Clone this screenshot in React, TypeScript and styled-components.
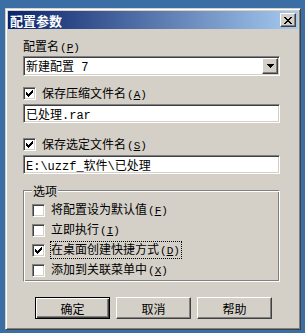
import styled, { createGlobalStyle } from "styled-components";

const GlobalStyle = createGlobalStyle`
  html, body {
    margin: 0;
    padding: 0;
    background: #3a6ea5;
  }
  body {
    font-family: "Liberation Mono", "Noto Sans CJK SC", monospace;
    font-size: 12px;
    color: #000;
  }
`;

const Desktop = styled.div`
  width: 305px;
  height: 333px;
  padding: 8px 0 0 5px;
  box-sizing: border-box;
`;

/*----------------------------------
	Window frame
----------------------------------*/
const Window = styled.div`
  width: 296px;
  height: 322px;
  box-sizing: border-box;
  background: #d4d0c8;
  border: 1px solid;
  border-color: #d4d0c8 #404040 #404040 #d4d0c8;
  box-shadow: inset 1px 1px #fff, inset -1px -1px #808080;
  padding: 2px;
  display: flex;
  flex-direction: column;
`;

const TitleBar = styled.div`
  height: 18px;
  display: flex;
  align-items: center;
  justify-content: space-between;
  padding: 0 2px;
  background: linear-gradient(90deg, #0a246a 0%, #a6caf0 100%);
`;

const Title = styled.span`
  color: #fff;
  font-family: "Noto Sans CJK SC", sans-serif;
  font-weight: bold;
  font-size: 13px;
  line-height: 15px;
`;

const Raised = styled.div`
  box-sizing: border-box;
  background: #d4d0c8;
  border: 1px solid;
  border-color: #fff #404040 #404040 #fff;
  box-shadow: inset -1px -1px #808080;
  display: flex;
  align-items: center;
  justify-content: center;
`;

const CloseButton = styled(Raised)`
  width: 16px;
  height: 14px;
`;

const Content = styled.div`
  display: flex;
  flex-direction: column;
  padding: 9px 18px 0 15px;
`;

const Label = styled.div`
  line-height: 16px;
  height: 16px;
  font-family: "Noto Sans CJK SC", sans-serif;
`;

const Key = styled.span`
  font-family: "Liberation Mono", monospace;
  font-size: 11px;
  margin-left: 1px;
`;

/*----------------------------------
	Fields
----------------------------------*/
const Sunken = styled.div<{ $h: number; $mt: number }>`
  box-sizing: border-box;
  height: ${(p) => p.$h}px;
  margin-top: ${(p) => p.$mt}px;
  background: #fff;
  border: 1px solid;
  border-color: #808080 #fff #fff #808080;
  box-shadow: inset 1px 1px #404040, inset -1px -1px #d4d0c8;
  display: flex;
  align-items: center;
  padding-left: 2px;
  white-space: nowrap;
`;

const Combo = styled(Sunken)`
  justify-content: space-between;
  padding-right: 1px;
`;

const ComboText = styled.span`
  font-family: "Noto Sans CJK SC", sans-serif;
`;

const DropButton = styled(Raised)`
  width: 16px;
  height: 16px;
`;

const Row = styled.div<{ $mt?: number; $h?: number }>`
  display: flex;
  align-items: center;
  height: ${(p) => p.$h ?? 15}px;
  margin-top: ${(p) => p.$mt ?? 0}px;
`;

const Box = styled.div`
  width: 13px;
  height: 13px;
  box-sizing: border-box;
  flex: none;
  background: #fff;
  border: 1px solid;
  border-color: #808080 #fff #fff #808080;
  box-shadow: inset 1px 1px #404040, inset -1px -1px #d4d0c8;
  display: flex;
  align-items: center;
  justify-content: center;
`;

const BoxText = styled.span<{ $focus?: boolean }>`
  margin-left: ${(p) => (p.$focus ? 5 : 6)}px;
  font-family: "Noto Sans CJK SC", sans-serif;
  line-height: 14px;
  border: ${(p) => (p.$focus ? "1px dotted #000" : "none")};
  padding: 0 1px 0 0;
  white-space: nowrap;
`;

/*----------------------------------
	Group box
----------------------------------*/
const Group = styled.div`
  position: relative;
  margin-top: 16px;
  border: 1px solid;
  border-color: #808080 #fff #fff #808080;
  box-shadow: inset 1px 1px #fff, inset -1px -1px #808080;
  padding: 9px 0 1px 8px;
`;

const Legend = styled.span`
  position: absolute;
  top: -7px;
  left: 8px;
  padding: 0 1px;
  background: #d4d0c8;
  line-height: 13px;
  font-family: "Noto Sans CJK SC", sans-serif;
`;

/*----------------------------------
	Buttons
----------------------------------*/
const Buttons = styled.div`
  display: flex;
  gap: 6px;
  margin: 15px 0 0 12px;
`;

const Button = styled.div<{ $default?: boolean }>`
  width: 75px;
  height: 22px;
  box-sizing: border-box;
  display: flex;
  align-items: center;
  justify-content: center;
  font-family: "Noto Sans CJK SC", sans-serif;
  font-size: 12px;
  background: #d4d0c8;
  border: 1px solid;
  border-color: ${(p) => (p.$default ? "#000" : "#fff #404040 #404040 #fff")};
  box-shadow: ${(p) =>
    p.$default
      ? "inset 1px 1px #fff, inset -1px -1px #404040, inset -2px -2px #808080"
      : "inset -1px -1px #808080"};
`;

const CloseGlyph = () => (
  <svg width="8" height="7" shapeRendering="crispEdges">
    {[0, 1, 2, 3, 4, 5, 6].map((r) => {
      const l = Math.min(r, 6 - r);
      return (
        <g key={r}>
          <rect x={l} y={r} width="2" height="1" fill="#000" />
          <rect x={6 - l} y={r} width="2" height="1" fill="#000" />
        </g>
      );
    })}
  </svg>
);

const ArrowGlyph = () => (
  <svg width="7" height="4" shapeRendering="crispEdges">
    {[0, 1, 2, 3].map((r) => (
      <rect key={r} x={r} y={r} width={7 - r * 2} height="1" fill="#000" />
    ))}
  </svg>
);

const CheckGlyph = () => (
  <svg width="7" height="7" shapeRendering="crispEdges">
    {[2, 3, 4, 3, 2, 1, 0].map((t, i) => (
      <rect key={i} x={i} y={t} width="1" height="3" fill="#000" />
    ))}
  </svg>
);

const CheckBox = ({
  checked,
  focus,
  children,
}: {
  checked?: boolean;
  focus?: boolean;
  children: React.ReactNode;
}) => (
  <>
    <Box>{checked && <CheckGlyph />}</Box>
    <BoxText $focus={focus}>{children}</BoxText>
  </>
);

const options = [
  { text: "将配置设为默认值", key: "F", checked: false },
  { text: "立即执行", key: "I", checked: false },
  { text: "在桌面创建快捷方式", key: "D", checked: true, focus: true },
  { text: "添加到关联菜单中", key: "X", checked: false },
];

const App = () => {
  return (
    <Desktop>
      <GlobalStyle />
      <Window>
        <TitleBar>
          <Title>配置参数</Title>
          <CloseButton>
            <CloseGlyph />
          </CloseButton>
        </TitleBar>
        <Content>
          <Label>
            配置名<Key>(<u>P</u>)</Key>
          </Label>
          <Combo $h={20} $mt={2}>
            <span>
              <ComboText>新建配置</ComboText> 7
            </span>
            <DropButton>
              <ArrowGlyph />
            </DropButton>
          </Combo>

          <Row $mt={10}>
            <CheckBox checked>
              保存压缩文件名<Key>(<u>A</u>)</Key>
            </CheckBox>
          </Row>
          <Sunken $h={19} $mt={3}>
            已处理.rar
          </Sunken>

          <Row $mt={14}>
            <CheckBox checked>
              保存选定文件名<Key>(<u>S</u>)</Key>
            </CheckBox>
          </Row>
          <Sunken $h={19} $mt={3}>
            E:\uzzf_软件\已处理
          </Sunken>

          <Group>
            <Legend>选项</Legend>
            {options.map((o) => (
              <Row key={o.key} $h={20}>
                <CheckBox checked={o.checked} focus={o.focus}>
                  {o.text}
                  <Key>
                    (<u>{o.key}</u>)
                  </Key>
                </CheckBox>
              </Row>
            ))}
          </Group>

          <Buttons>
            <Button $default>确定</Button>
            <Button>取消</Button>
            <Button>帮助</Button>
          </Buttons>
        </Content>
      </Window>
    </Desktop>
  );
};

export default App;
